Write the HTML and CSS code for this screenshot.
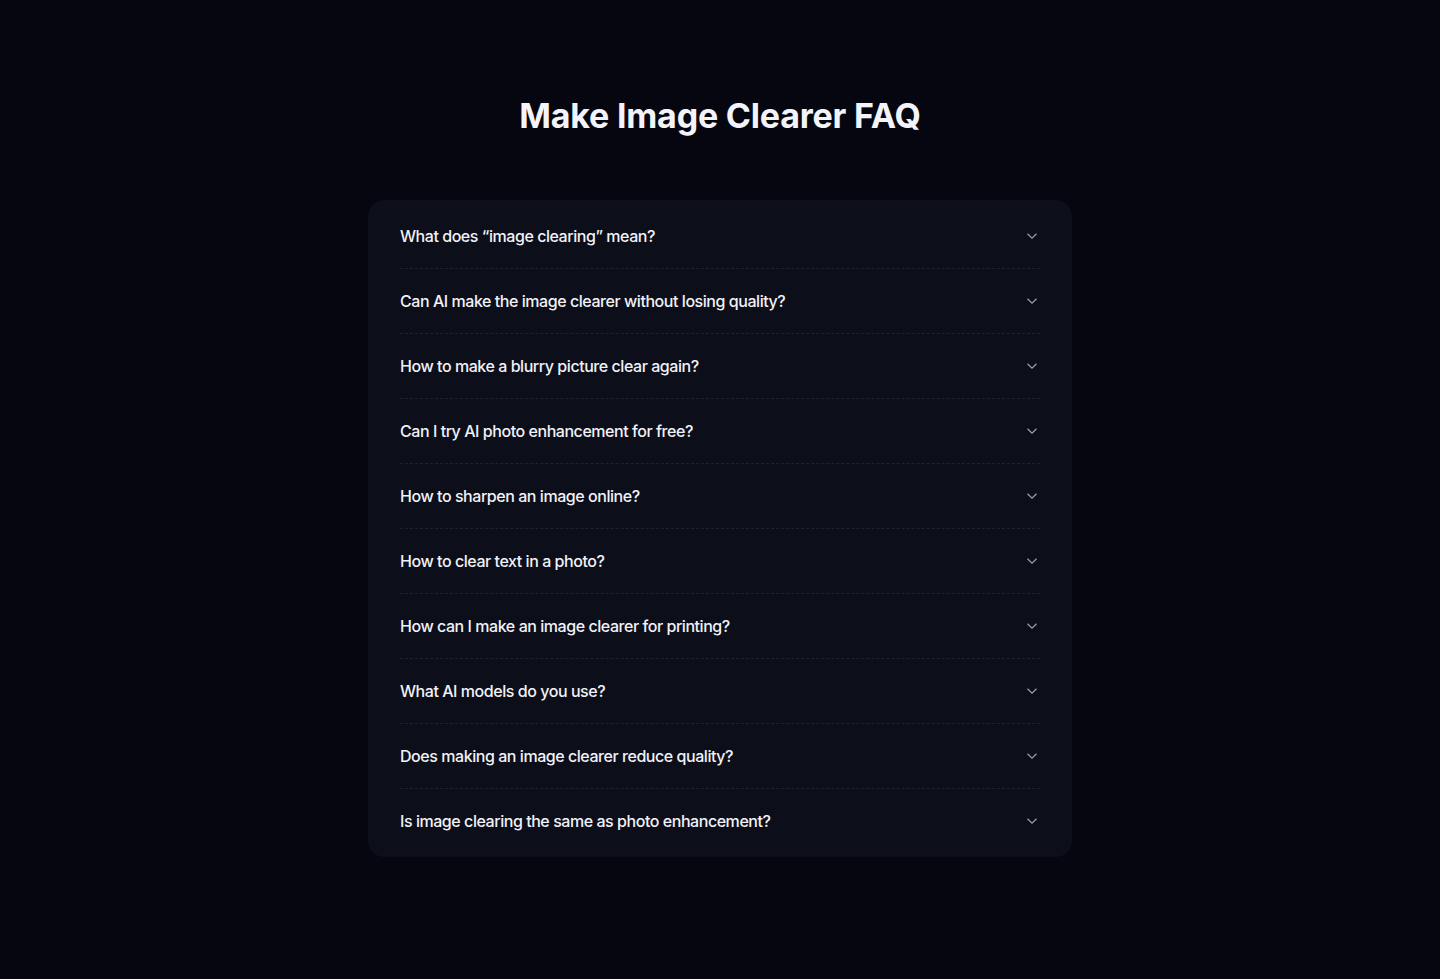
FILE: index.html
```html
<!DOCTYPE html>
<html lang="en">
<head>
    <meta charset="UTF-8">
    <meta name="viewport" content="width=device-width, initial-scale=1.0">
    <title>Make Image Clearer FAQ</title>
    <link rel="stylesheet" href="styles.css">
</head>
<body>
    <section class="faq">
        <h2>Make Image Clearer FAQ</h2>
        <div class="faq-list">
            <div class="faq-item"><span>What does “image clearing” mean?</span><svg class="chev" viewBox="0 0 12 8"><path d="M1.5 1.8 6 6.2l4.5-4.4"/></svg></div>
            <div class="faq-item"><span>Can AI make the image clearer without losing quality?</span><svg class="chev" viewBox="0 0 12 8"><path d="M1.5 1.8 6 6.2l4.5-4.4"/></svg></div>
            <div class="faq-item"><span>How to make a blurry picture clear again?</span><svg class="chev" viewBox="0 0 12 8"><path d="M1.5 1.8 6 6.2l4.5-4.4"/></svg></div>
            <div class="faq-item"><span>Can I try AI photo enhancement for free?</span><svg class="chev" viewBox="0 0 12 8"><path d="M1.5 1.8 6 6.2l4.5-4.4"/></svg></div>
            <div class="faq-item"><span>How to sharpen an image online?</span><svg class="chev" viewBox="0 0 12 8"><path d="M1.5 1.8 6 6.2l4.5-4.4"/></svg></div>
            <div class="faq-item"><span>How to clear text in a photo?</span><svg class="chev" viewBox="0 0 12 8"><path d="M1.5 1.8 6 6.2l4.5-4.4"/></svg></div>
            <div class="faq-item"><span>How can I make an image clearer for printing?</span><svg class="chev" viewBox="0 0 12 8"><path d="M1.5 1.8 6 6.2l4.5-4.4"/></svg></div>
            <div class="faq-item"><span>What AI models do you use?</span><svg class="chev" viewBox="0 0 12 8"><path d="M1.5 1.8 6 6.2l4.5-4.4"/></svg></div>
            <div class="faq-item"><span>Does making an image clearer reduce quality?</span><svg class="chev" viewBox="0 0 12 8"><path d="M1.5 1.8 6 6.2l4.5-4.4"/></svg></div>
            <div class="faq-item"><span>Is image clearing the same as photo enhancement?</span><svg class="chev" viewBox="0 0 12 8"><path d="M1.5 1.8 6 6.2l4.5-4.4"/></svg></div>
        </div>
    </section>
</body>
</html>
```

FILE: styles.css
```css
body {
    margin: 0;
    background: #05060f;
    font-family: Inter, "Noto Sans", sans-serif;
    color: #f1f2f8;
    min-height: 979px;
}
.faq {
    display: flex;
    flex-direction: column;
    align-items: center;
    padding-top: 94px;
}
.faq h2 {
    margin: 0 0 62px;
    font-size: 34px;
    line-height: 44px;
    font-weight: 700;
    letter-spacing: -0.2px;
    color: #f3f4fa;
}
.faq-list {
    width: 640px;
    padding: 4px 32px 4px;
    background: #0c0e19;
    border-radius: 16px;
}
.faq-item {
    display: flex;
    align-items: center;
    justify-content: space-between;
    height: 64px;
    font-size: 16px;
    font-weight: 500;
    letter-spacing: -0.45px;
    border-bottom: 1px dashed #1f2230;
}
.faq-item:last-child {
    border-bottom: none;
}
.chev {
    width: 12px;
    height: 8px;
    margin-right: 2px;
    fill: none;
    stroke: #9a9cab;
    stroke-width: 1.3;
}
```
